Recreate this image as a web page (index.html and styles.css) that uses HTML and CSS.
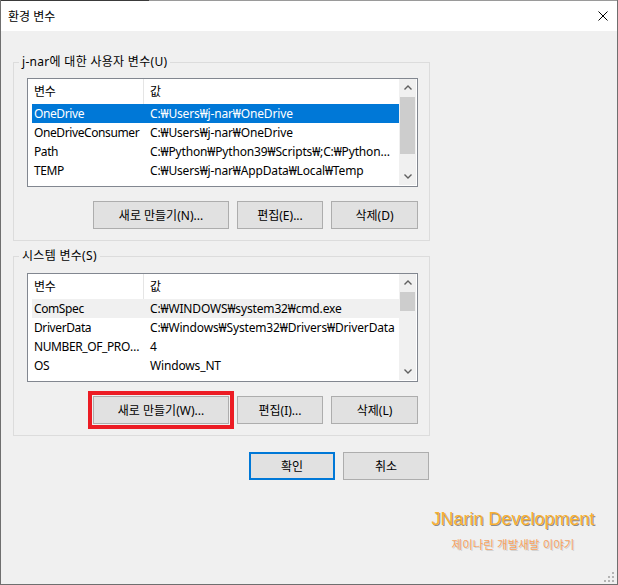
FILE: index.html
```html
<!DOCTYPE html>
<html lang="ko">
  <head>
    <meta charset="UTF-8" />
    <title>환경 변수</title>
    <link rel="stylesheet" href="styles.css">
  </head>
  <body>
    <div class="window">
      <div class="titlebar">
        <span class="title">환경 변수</span>
        <svg class="close" width="10" height="10" viewBox="0 0 10 10">
          <path d="M0.5 0.5 L9.5 9.5 M9.5 0.5 L0.5 9.5" stroke="#000" stroke-width="1" fill="none" />
        </svg>
      </div>

      <div class="content">
        <fieldset class="group user">
          <legend>j-nar에 대한 사용자 변수(U)</legend>
          <div class="list">
            <div class="list-body">
              <div class="row head"><span class="c1">변수</span><span class="c2">값</span></div>
              <div class="row selected"><span class="c1">OneDrive</span><span class="c2">C:₩Users₩j-nar₩OneDrive</span></div>
              <div class="row"><span class="c1">OneDriveConsumer</span><span class="c2">C:₩Users₩j-nar₩OneDrive</span></div>
              <div class="row"><span class="c1">Path</span><span class="c2">C:₩Python₩Python39₩Scripts₩;C:₩Python₩Python39₩;C:₩Users₩j-nar</span></div>
              <div class="row"><span class="c1">TEMP</span><span class="c2">C:₩Users₩j-nar₩AppData₩Local₩Temp</span></div>
            </div>
            <div class="scrollbar">
              <div class="arrow">
                <svg width="8" height="5" viewBox="0 0 8 5"><path d="M0.5 4.5 L4 1 L7.5 4.5" stroke="#606060" stroke-width="1.4" fill="none" /></svg>
              </div>
              <div class="track"><div class="thumb" style="height: 57px"></div></div>
              <div class="arrow">
                <svg width="8" height="5" viewBox="0 0 8 5"><path d="M0.5 0.5 L4 4 L7.5 0.5" stroke="#606060" stroke-width="1.4" fill="none" /></svg>
              </div>
            </div>
          </div>
          <div class="buttons">
            <button class="btn btn-new">새로 만들기(N)...</button>
            <button class="btn btn-edit">편집(E)...</button>
            <button class="btn btn-del">삭제(D)</button>
          </div>
        </fieldset>

        <fieldset class="group system">
          <legend>시스템 변수(S)</legend>
          <div class="list">
            <div class="list-body">
              <div class="row head"><span class="c1">변수</span><span class="c2">값</span></div>
              <div class="row inactive"><span class="c1">ComSpec</span><span class="c2">C:₩WINDOWS₩system32₩cmd.exe</span></div>
              <div class="row"><span class="c1">DriverData</span><span class="c2">C:₩Windows₩System32₩Drivers₩DriverData</span></div>
              <div class="row"><span class="c1">NUMBER_OF_PROCESSORS</span><span class="c2">4</span></div>
              <div class="row"><span class="c1">OS</span><span class="c2">Windows_NT</span></div>
            </div>
            <div class="scrollbar">
              <div class="arrow">
                <svg width="8" height="5" viewBox="0 0 8 5"><path d="M0.5 4.5 L4 1 L7.5 4.5" stroke="#606060" stroke-width="1.4" fill="none" /></svg>
              </div>
              <div class="track"><div class="thumb" style="height: 19px"></div></div>
              <div class="arrow">
                <svg width="8" height="5" viewBox="0 0 8 5"><path d="M0.5 0.5 L4 4 L7.5 0.5" stroke="#606060" stroke-width="1.4" fill="none" /></svg>
              </div>
            </div>
          </div>
          <div class="buttons">
            <button class="btn btn-new marked">새로 만들기(W)...</button>
            <button class="btn btn-edit">편집(I)...</button>
            <button class="btn btn-del">삭제(L)</button>
          </div>
        </fieldset>

        <div class="dialog-buttons">
          <button class="btn btn-dialog default">확인</button>
          <button class="btn btn-dialog">취소</button>
        </div>
      </div>

      <div class="watermark">
        <div class="wm-title">JNarin Development</div>
        <div class="wm-sub">제이나린 개발새발 이야기</div>
      </div>

      <svg class="grip" width="10" height="10" viewBox="0 0 10 10">
        <rect x="8" y="0" width="2" height="2" fill="#b4b4b4" />
        <rect x="4" y="4" width="2" height="2" fill="#b4b4b4" />
        <rect x="8" y="4" width="2" height="2" fill="#b4b4b4" />
        <rect x="0" y="8" width="2" height="2" fill="#b4b4b4" />
        <rect x="4" y="8" width="2" height="2" fill="#b4b4b4" />
        <rect x="8" y="8" width="2" height="2" fill="#b4b4b4" />
      </svg>
    </div>
  </body>
</html>
```

FILE: styles.css
```css
* {
  box-sizing: border-box;
}

body {
  margin: 0;
  background-color: #f0f0f0;
  font-family: "Noto Sans", "Noto Sans CJK KR", sans-serif;
  font-size: 12px;
  color: #000;
}

.window {
  position: relative;
  width: 618px;
  height: 585px;
  background-color: #f0f0f0;
  border: 1px solid #6f6f6f;
  border-top: none;
}

.titlebar {
  height: 31px;
  display: flex;
  align-items: center;
  justify-content: space-between;
  padding: 0 9px 0 7px;
  background: linear-gradient(to right, #3a3a3a 148px, #9a9a9a 148px) top / 100% 1px no-repeat, #fff;
}

.content {
  width: 417px;
  margin-left: 12px;
}

.group {
  margin: 0;
  min-width: 0;
  border: 1px solid #dcdcdc;
  padding: 8px 11px 11px 13px;
}

.group legend {
  margin-left: -8px;
  padding: 0 3px;
  line-height: 16px;
  letter-spacing: 0.3px;
}

.user {
  margin-top: 23px;
}

.system {
  margin-top: 7px;
  padding-top: 9px;
}

.list {
  display: flex;
  width: 391px;
  height: 109px;
  border: 1px solid #828790;
  background-color: #fff;
}

.list-body {
  width: 371px;
  overflow: hidden;
}

.row {
  display: flex;
  height: 19px;
  line-height: 19px;
  margin-left: 4px;
  white-space: nowrap;
  letter-spacing: -0.15px;
}

.row.head {
  height: 25px;
  line-height: 25px;
}

.c1 {
  width: 112px;
  flex-shrink: 0;
  padding: 0 0 0 2px;
  overflow: hidden;
  text-overflow: ellipsis;
  letter-spacing: -0.4px;
}

.head .c1 {
  border-right: 1px solid #e5e5e5;
}

.c2 {
  flex: 1;
  min-width: 0;
  padding: 0 3px 0 6px;
  overflow: hidden;
  text-overflow: ellipsis;
}

.selected {
  background-color: #0078d7;
  color: #fff;
}

.inactive {
  background-color: #f0f0f0;
}

.scrollbar {
  width: 17px;
  height: 106px;
  margin: 0 1px 1px 0;
  background-color: #f0f0f0;
  display: flex;
  flex-direction: column;
}

.arrow {
  height: 17px;
  display: flex;
  align-items: center;
  justify-content: center;
}

.track {
  flex: 1;
  padding-top: 1px;
}

.thumb {
  margin: 0 1px;
  background-color: #cdcdcd;
}

.buttons {
  display: flex;
  justify-content: flex-end;
  gap: 8px;
  margin-top: 14px;
}

.btn {
  height: 28px;
  padding: 0;
  border: 1px solid #adadad;
  background-color: #e1e1e1;
  font: inherit;
  color: #000;
}

.btn-new {
  width: 136px;
}

.btn-edit {
  width: 86px;
}

.btn-del {
  width: 87px;
}

.marked {
  outline: 4px solid #ec1c24;
  outline-offset: 1px;
}

.dialog-buttons {
  display: flex;
  justify-content: flex-end;
  gap: 8px;
  margin-top: 16px;
  padding-right: 1px;
}

.btn-dialog {
  width: 86px;
}

.default {
  border: 2px solid #0078d7;
}

.watermark {
  position: absolute;
  left: 420px;
  top: 509px;
  width: 184px;
  text-align: center;
}

.wm-title {
  font-family: "Liberation Sans", Arial, sans-serif;
  font-size: 18px;
  line-height: 20px;
  color: #f8b133;
  text-shadow: 1px 1px 0 #8c8c8c;
}

.wm-sub {
  margin-top: 7px;
  font-family: "Noto Sans CJK KR", sans-serif;
  font-size: 11.5px;
  line-height: 16px;
  color: #f6a25e;
  text-shadow: 1px 1px 0 #cfcfcf;
}

.grip {
  position: absolute;
  right: 3px;
  bottom: 2px;
}
```
